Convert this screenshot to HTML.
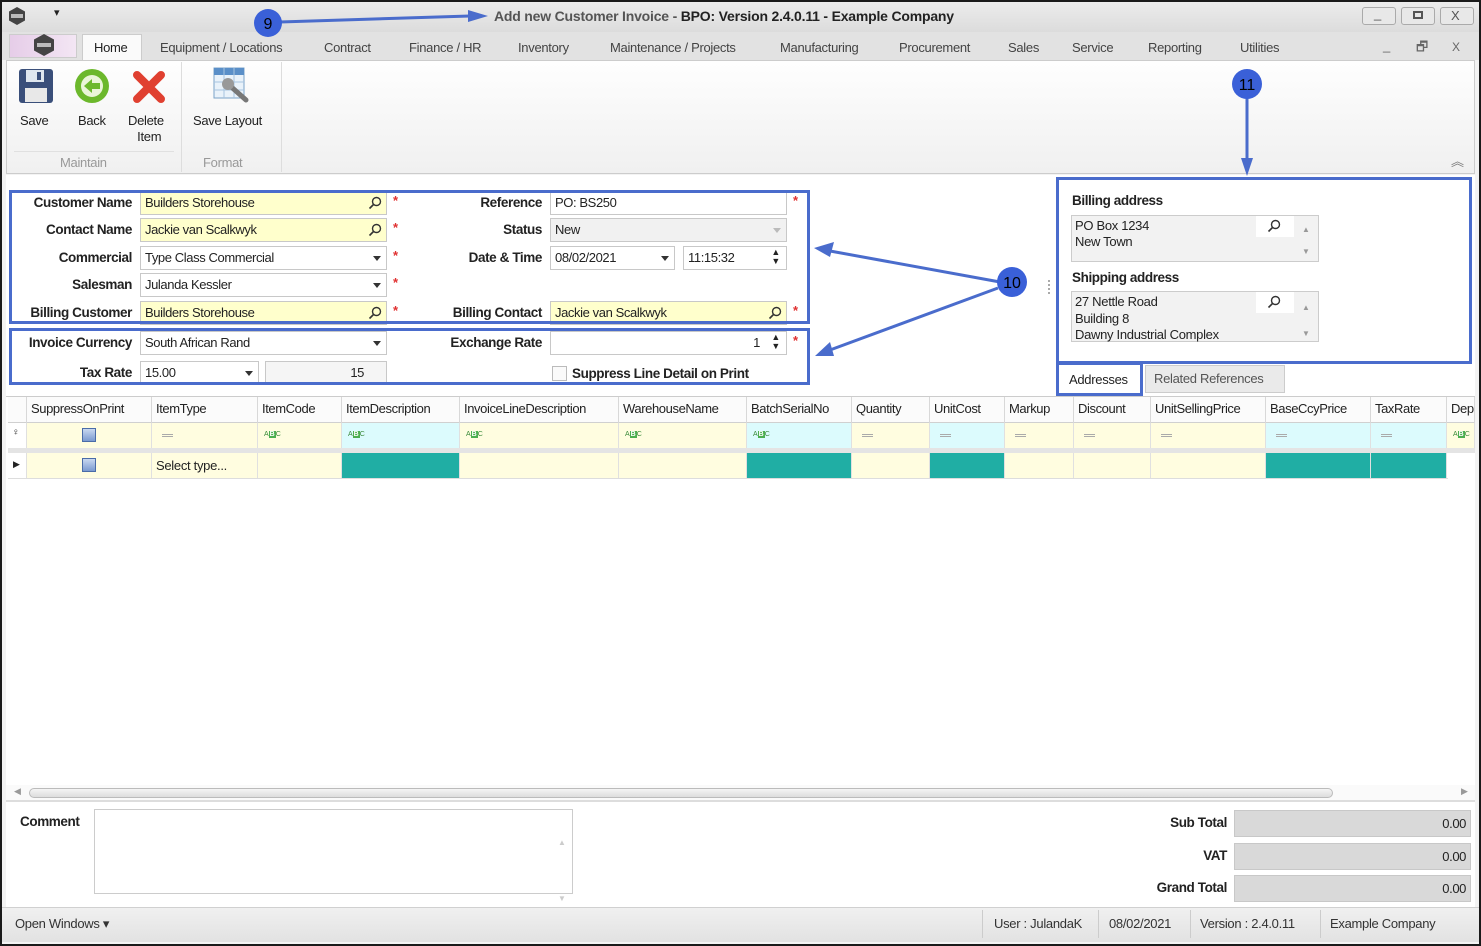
<!DOCTYPE html>
<html><head><meta charset="utf-8"><style>
*{box-sizing:border-box;margin:0;padding:0}
body{width:1481px;height:946px;overflow:hidden;background:#1a1a1a;font-family:"Liberation Sans",sans-serif;font-size:13px;color:#222;position:relative}
.a{position:absolute}
.t{position:absolute;white-space:nowrap;letter-spacing:-0.3px}
.lbl{position:absolute;white-space:nowrap;font-weight:bold;text-align:right;letter-spacing:-0.4px;font-size:13.5px;color:#222}
.in{position:absolute;border:1px solid #c8c8c8;background:#fff;height:24px;padding:3px 4px;white-space:nowrap;letter-spacing:-0.4px;font-size:13px}
.y{background:#ffffcc}
.star{position:absolute;color:#e03030;font-size:13px;font-weight:bold}
.dd{position:absolute;right:5px;top:9px;width:0;height:0;border-left:4px solid transparent;border-right:4px solid transparent;border-top:5px solid #333}
.mag{position:absolute;right:4px;top:4px;width:14px;height:14px}
.hc{position:absolute;top:0;height:26px;border-right:1px solid #d8d8d8;padding:4px 4px;white-space:nowrap;letter-spacing:-0.4px;font-size:13px;overflow:hidden}
.fc{position:absolute;top:0;height:25px;border-right:1px solid #e0e0e0;background:#fffde0}
.dc{position:absolute;top:0;height:25px;border-right:1px solid #e0e0e0;background:#fffde0}
.cy{background:#dcfbfd}
.tl{background:#20aea4}
.abc{position:absolute;left:6px;top:8px;font-size:7px;color:#3a8a3a;letter-spacing:0}
.abc b{background:#4caf50;color:#fff;padding:0 1px}
.eq{position:absolute;left:10px;top:11px;width:11px;height:3px;border-top:1px solid #aaa;border-bottom:1px solid #aaa}
</style></head><body>
<svg width="0" height="0" style="position:absolute"><defs><symbol id="m" viewBox="0 0 14 14"><circle cx="8.5" cy="5.5" r="4" fill="none" stroke="#333" stroke-width="1.4"/><line x1="5.5" y1="8.5" x2="1.5" y2="12.5" stroke="#333" stroke-width="1.6"/></symbol></defs></svg>
<div class="a" style="left:2px;top:2px;width:1477px;height:942px;background:#f3f3f3"></div>
<!-- title bar -->
<div class="a" style="left:2px;top:2px;width:1477px;height:30px;background:linear-gradient(#ececec,#dcdcdc)"></div>
<svg class="a" style="left:7px;top:6px" width="20" height="20"><path d="M10 1 L18 5.5 L18 14.5 L10 19 L2 14.5 L2 5.5 Z" fill="#444"/><rect x="4" y="8" width="12" height="4" fill="#bbb"/></svg>
<div class="t" style="left:54px;top:6px;font-size:11px">▾</div>
<div class="t" style="left:494px;top:8px;font-weight:bold;color:#555;font-size:14px;letter-spacing:-0.2px">Add new Customer Invoice - <span style="color:#222">BPO: Version 2.4.0.11 - Example Company</span></div>
<div class="a" style="left:1362px;top:7px;width:34px;height:18px;border:1px solid #aaa;border-radius:3px;background:#e8e8e8"></div>
<div class="a" style="left:1401px;top:7px;width:34px;height:18px;border:1px solid #aaa;border-radius:3px;background:#e8e8e8"></div>
<div class="a" style="left:1440px;top:7px;width:34px;height:18px;border:1px solid #aaa;border-radius:3px;background:#e8e8e8"></div>
<div class="t" style="left:1374px;top:6px;color:#555">_</div>
<div class="a" style="left:1413px;top:11px;width:10px;height:8px;border:2px solid #555"></div>
<div class="t" style="left:1451px;top:8px;color:#555">X</div>
<!-- tabs -->
<div class="a" style="left:2px;top:32px;width:1477px;height:28px;background:#e2e2e2"></div>
<div class="a" style="left:9px;top:34px;width:68px;height:24px;background:linear-gradient(90deg,#e6cde8,#f3e6f4);border:1px solid #ccc"></div>
<svg class="a" style="left:32px;top:33px" width="24" height="24"><path d="M12 1 L22 6.5 L22 17.5 L12 23 L2 17.5 L2 6.5 Z" fill="#444"/><rect x="5" y="10" width="14" height="4" fill="#bbb"/></svg>
<div class="a" style="left:82px;top:34px;width:60px;height:27px;background:#fafafa;border:1px solid #ccc;border-bottom:none"></div>
<div class="t" style="left:94px;top:40px">Home</div>
<div class="t" style="left:160px;top:40px;color:#444">Equipment / Locations</div>
<div class="t" style="left:324px;top:40px;color:#444">Contract</div>
<div class="t" style="left:409px;top:40px;color:#444">Finance / HR</div>
<div class="t" style="left:518px;top:40px;color:#444">Inventory</div>
<div class="t" style="left:610px;top:40px;color:#444">Maintenance / Projects</div>
<div class="t" style="left:780px;top:40px;color:#444">Manufacturing</div>
<div class="t" style="left:899px;top:40px;color:#444">Procurement</div>
<div class="t" style="left:1008px;top:40px;color:#444">Sales</div>
<div class="t" style="left:1072px;top:40px;color:#444">Service</div>
<div class="t" style="left:1148px;top:40px;color:#444">Reporting</div>
<div class="t" style="left:1240px;top:40px;color:#444">Utilities</div>
<div class="t" style="left:1383px;top:38px;color:#666">_</div>
<div class="t" style="left:1416px;top:38px;color:#666">🗗</div>
<div class="t" style="left:1452px;top:40px;color:#666;font-size:12px">X</div>
<!-- ribbon -->
<div class="a" style="left:6px;top:60px;width:1469px;height:114px;background:linear-gradient(#fefefe,#f0f0f0);border:1px solid #ccc"></div>
<div class="a" style="left:181px;top:62px;width:1px;height:110px;background:#ddd"></div>
<div class="a" style="left:281px;top:62px;width:1px;height:110px;background:#ddd"></div>
<svg class="a" style="left:18px;top:68px" width="36" height="36"><rect x="1" y="1" width="34" height="34" rx="3" fill="#3a4f7a"/><rect x="8" y="2" width="18" height="12" fill="#dfe6ee"/><rect x="19" y="4" width="4" height="8" fill="#3a4f7a"/><rect x="7" y="20" width="22" height="14" fill="#e8e8e8"/></svg>
<svg class="a" style="left:74px;top:68px" width="36" height="36"><circle cx="18" cy="18" r="17" fill="#6cb82c"/><circle cx="18" cy="18" r="11" fill="#eaf5d8"/><path d="M10 18 L18 11 L18 15 L26 15 L26 21 L18 21 L18 25 Z" fill="#6cb82c"/></svg>
<svg class="a" style="left:132px;top:70px" width="34" height="34"><path d="M5 5 L29 29 M29 5 L5 29" stroke="#e04030" stroke-width="8" stroke-linecap="round"/></svg>
<svg class="a" style="left:212px;top:66px" width="38" height="38"><rect x="2" y="2" width="30" height="30" fill="#e9f2fa" stroke="#7aa3c8"/><rect x="2" y="2" width="30" height="7" fill="#5a8fc8"/><path d="M2 16 H32 M2 24 H32 M12 2 V32 M22 2 V32" stroke="#a8c4e0"/><path d="M16 18 L34 34" stroke="#777" stroke-width="5" stroke-linecap="round"/><circle cx="16" cy="18" r="6" fill="#999"/></svg>
<div class="t" style="left:20px;top:113px">Save</div>
<div class="t" style="left:78px;top:113px">Back</div>
<div class="t" style="left:128px;top:113px;text-align:center;line-height:16px">Delete<br>&nbsp;&nbsp;Item</div>
<div class="t" style="left:193px;top:113px">Save Layout</div>
<div class="a" style="left:14px;top:151px;width:160px;height:1px;background:#e0e0e0"></div>
<div class="t" style="left:60px;top:155px;color:#999">Maintain</div>
<div class="t" style="left:203px;top:155px;color:#999">Format</div>
<div class="t" style="left:1451px;top:151px;color:#777">︽</div>
<!-- main area -->
<div class="a" style="left:6px;top:175px;width:1469px;height:732px;background:#fff"></div>
<!-- form left -->
<div class="lbl" style="left:10px;top:195px;width:122px">Customer Name</div>
<div class="lbl" style="left:10px;top:222px;width:122px">Contact Name</div>
<div class="lbl" style="left:10px;top:250px;width:122px">Commercial</div>
<div class="lbl" style="left:10px;top:277px;width:122px">Salesman</div>
<div class="lbl" style="left:10px;top:305px;width:122px">Billing Customer</div>
<div class="lbl" style="left:10px;top:335px;width:122px">Invoice Currency</div>
<div class="lbl" style="left:10px;top:365px;width:122px">Tax Rate</div>
<div class="in y" style="left:140px;top:191px;width:247px">Builders Storehouse<svg class="mag"><use href="#m"/></svg></div>
<div class="in y" style="left:140px;top:218px;width:247px">Jackie van Scalkwyk<svg class="mag"><use href="#m"/></svg></div>
<div class="in" style="left:140px;top:246px;width:247px">Type Class Commercial<span class="dd"></span></div>
<div class="in" style="left:140px;top:273px;width:247px">Julanda Kessler<span class="dd"></span></div>
<div class="in y" style="left:140px;top:301px;width:247px">Builders Storehouse<svg class="mag"><use href="#m"/></svg></div>
<div class="in" style="left:140px;top:331px;width:247px">South African Rand<span class="dd"></span></div>
<div class="in" style="left:140px;top:361px;width:119px">15.00<span class="dd"></span></div>
<div class="in" style="left:265px;top:361px;width:122px;background:#f5f5f5;text-align:right;padding-right:22px">15</div>
<div class="star" style="left:393px;top:193px">*</div>
<div class="star" style="left:393px;top:220px">*</div>
<div class="star" style="left:393px;top:248px">*</div>
<div class="star" style="left:393px;top:275px">*</div>
<div class="star" style="left:393px;top:303px">*</div>
<!-- form right -->
<div class="lbl" style="left:410px;top:195px;width:132px">Reference</div>
<div class="lbl" style="left:410px;top:222px;width:132px">Status</div>
<div class="lbl" style="left:410px;top:250px;width:132px">Date &amp; Time</div>
<div class="lbl" style="left:410px;top:305px;width:132px">Billing Contact</div>
<div class="lbl" style="left:410px;top:335px;width:132px">Exchange Rate</div>
<div class="in" style="left:550px;top:191px;width:237px">PO: BS250</div>
<div class="in" style="left:550px;top:218px;width:237px;background:#f1f1f1">New<span class="dd" style="border-top-color:#bbb"></span></div>
<div class="in" style="left:550px;top:246px;width:125px">08/02/2021<span class="dd"></span></div>
<div class="in" style="left:683px;top:246px;width:104px">11:15:32<span class="t" style="right:6px;top:1px;font-size:9px;line-height:9px">▲<br>▼</span></div>
<div class="in y" style="left:550px;top:301px;width:237px">Jackie van Scalkwyk<svg class="mag"><use href="#m"/></svg></div>
<div class="in" style="left:550px;top:331px;width:237px;text-align:right;padding-right:26px">1<span class="t" style="right:6px;top:1px;font-size:9px;line-height:9px">▲<br>▼</span></div>
<div class="star" style="left:793px;top:193px">*</div>
<div class="star" style="left:793px;top:303px">*</div>
<div class="star" style="left:793px;top:333px">*</div>
<div class="a" style="left:552px;top:366px;width:15px;height:15px;border:1px solid #bbb;background:#fafafa"></div>
<div class="lbl" style="left:572px;top:366px;text-align:left">Suppress Line Detail on Print</div>
<!-- annotation boxes -->
<div class="a" style="left:9px;top:190px;width:801px;height:134px;border:3px solid #4a6ccc"></div>
<div class="a" style="left:9px;top:328px;width:801px;height:57px;border:3px solid #4a6ccc"></div>
<!-- right panel -->
<div class="a" style="left:1048px;top:280px;width:3px;height:14px;border-left:2px dotted #aaa"></div>
<div class="a" style="left:1056px;top:177px;width:416px;height:187px;border:3px solid #4a6ccc"></div>
<div class="lbl" style="left:1072px;top:193px;text-align:left">Billing address</div>
<div class="a" style="left:1071px;top:215px;width:248px;height:47px;border:1px solid #ccc;background:#f2f2f2"></div>
<div class="a" style="left:1256px;top:216px;width:38px;height:21px;background:#fff"></div>
<div class="t" style="left:1075px;top:218px;line-height:16px">PO Box 1234<br>New Town</div>
<svg class="a" style="left:1267px;top:219px" width="14" height="14"><use href="#m"/></svg>
<div class="t" style="left:1302px;top:219px;font-size:8px;color:#999;line-height:22px">▲<br>▼</div>
<div class="lbl" style="left:1072px;top:270px;text-align:left">Shipping address</div>
<div class="a" style="left:1071px;top:291px;width:248px;height:51px;border:1px solid #ccc;background:#f2f2f2"></div>
<div class="a" style="left:1256px;top:292px;width:38px;height:21px;background:#fff"></div>
<div class="t" style="left:1075px;top:294px;line-height:16.5px">27 Nettle Road<br>Building 8<br>Dawny Industrial Complex</div>
<svg class="a" style="left:1267px;top:295px" width="14" height="14"><use href="#m"/></svg>
<div class="t" style="left:1302px;top:295px;font-size:8px;color:#999;line-height:26px">▲<br>▼</div>
<div class="a" style="left:1145px;top:365px;width:140px;height:28px;background:#eaeaea;border:1px solid #ccc"></div>
<div class="t" style="left:1154px;top:371px;color:#555">Related References</div>
<div class="a" style="left:1056px;top:362px;width:87px;height:34px;border:3px solid #4a6ccc;background:#fff"></div>
<div class="t" style="left:1069px;top:372px">Addresses</div>
<!-- arrows -->
<svg class="a" style="left:0;top:0" width="1481" height="400">
<g stroke="#4a6ccc" stroke-width="3" fill="#4a6ccc">
<line x1="280" y1="22" x2="470" y2="16"/><path d="M488 16 L468 10 L468 22 Z" stroke="none"/>
<line x1="1247" y1="96" x2="1247" y2="160"/><path d="M1247 176 L1241 158 L1253 158 Z" stroke="none"/>
<line x1="1000" y1="282" x2="830" y2="251"/><path d="M814 248 L834 242 L830 257 Z" stroke="none"/>
<line x1="998" y1="288" x2="830" y2="350"/><path d="M815 356 L830 342 L834 356 Z" stroke="none"/>
</g>
<circle cx="268" cy="23" r="14" fill="#3a60d8"/><text x="268" y="29" font-size="16" text-anchor="middle" font-family="Liberation Sans">9</text>
<circle cx="1247" cy="84" r="15" fill="#3a60d8"/><text x="1247" y="90" font-size="16" text-anchor="middle" font-family="Liberation Sans">11</text>
<circle cx="1012" cy="282" r="15" fill="#3a60d8"/><text x="1012" y="288" font-size="16" text-anchor="middle" font-family="Liberation Sans">10</text>
</svg>
<!-- grid -->
<div class="a" style="left:6px;top:396px;width:1469px;height:1px;background:#ccc"></div>
<div class="a" style="left:8px;top:397px;width:1467px;height:26px;background:#fbfbfb;border-bottom:1px solid #d0d0d0">
<div class="hc" style="left:0;width:19px"></div>
<div class="hc" style="left:19px;width:125px">SuppressOnPrint</div>
<div class="hc" style="left:144px;width:106px">ItemType</div>
<div class="hc" style="left:250px;width:84px">ItemCode</div>
<div class="hc" style="left:334px;width:118px">ItemDescription</div>
<div class="hc" style="left:452px;width:159px">InvoiceLineDescription</div>
<div class="hc" style="left:611px;width:128px">WarehouseName</div>
<div class="hc" style="left:739px;width:105px">BatchSerialNo</div>
<div class="hc" style="left:844px;width:78px">Quantity</div>
<div class="hc" style="left:922px;width:75px">UnitCost</div>
<div class="hc" style="left:997px;width:69px">Markup</div>
<div class="hc" style="left:1066px;width:77px">Discount</div>
<div class="hc" style="left:1143px;width:115px">UnitSellingPrice</div>
<div class="hc" style="left:1258px;width:105px">BaseCcyPrice</div>
<div class="hc" style="left:1363px;width:76px">TaxRate</div>
<div class="hc" style="left:1439px;width:28px">Dep</div>
</div>
<div class="a" style="left:8px;top:423px;width:1467px;height:25px">
<div class="fc" style="left:0;width:19px;background:#fff"><span class="t" style="left:4px;top:4px;font-size:10px">♀</span></div>
<div class="fc" style="left:19px;width:125px"><div class="a" style="left:55px;top:5px;width:14px;height:14px;border:1px solid #4a6ca8;background:linear-gradient(#c8d8f0,#7a9ad0)"></div></div>
<div class="fc" style="left:144px;width:106px"><span class="eq"></span></div>
<div class="fc" style="left:250px;width:84px"><span class="abc">A<b>B</b>C</span></div>
<div class="fc cy" style="left:334px;width:118px"><span class="abc">A<b>B</b>C</span></div>
<div class="fc" style="left:452px;width:159px"><span class="abc">A<b>B</b>C</span></div>
<div class="fc" style="left:611px;width:128px"><span class="abc">A<b>B</b>C</span></div>
<div class="fc cy" style="left:739px;width:105px"><span class="abc">A<b>B</b>C</span></div>
<div class="fc" style="left:844px;width:78px"><span class="eq"></span></div>
<div class="fc cy" style="left:922px;width:75px"><span class="eq"></span></div>
<div class="fc" style="left:997px;width:69px"><span class="eq"></span></div>
<div class="fc" style="left:1066px;width:77px"><span class="eq"></span></div>
<div class="fc" style="left:1143px;width:115px"><span class="eq"></span></div>
<div class="fc cy" style="left:1258px;width:105px"><span class="eq"></span></div>
<div class="fc cy" style="left:1363px;width:76px"><span class="eq"></span></div>
<div class="fc" style="left:1439px;width:28px"><span class="abc">A<b>B</b>C</span></div>
</div>
<div class="a" style="left:8px;top:448px;width:1467px;height:5px;background:#e4e4e4"></div>
<div class="a" style="left:8px;top:453px;width:1440px;height:26px;border-bottom:1px solid #ddd">
<div class="dc" style="left:0;width:19px;background:#fff"><span class="t" style="left:5px;top:6px;font-size:9px">▶</span></div>
<div class="dc" style="left:19px;width:125px"><div class="a" style="left:55px;top:5px;width:14px;height:14px;border:1px solid #4a6ca8;background:linear-gradient(#c8d8f0,#7a9ad0)"></div></div>
<div class="dc" style="left:144px;width:106px"><span class="t" style="left:4px;top:5px">Select type...</span></div>
<div class="dc" style="left:250px;width:84px"></div>
<div class="dc tl" style="left:334px;width:118px"></div>
<div class="dc" style="left:452px;width:159px"></div>
<div class="dc" style="left:611px;width:128px"></div>
<div class="dc tl" style="left:739px;width:105px"></div>
<div class="dc" style="left:844px;width:78px"></div>
<div class="dc tl" style="left:922px;width:75px"></div>
<div class="dc" style="left:997px;width:69px"></div>
<div class="dc" style="left:1066px;width:77px"></div>
<div class="dc" style="left:1143px;width:115px"></div>
<div class="dc tl" style="left:1258px;width:105px"></div>
<div class="dc tl" style="left:1363px;width:76px"></div>
</div>
<!-- scrollbar -->
<div class="a" style="left:6px;top:785px;width:1469px;height:17px;background:#fafafa;border-bottom:2px solid #ddd"></div>
<div class="t" style="left:14px;top:786px;font-size:9px;color:#999">◀</div>
<div class="t" style="left:1461px;top:786px;font-size:9px;color:#999">▶</div>
<div class="a" style="left:29px;top:788px;width:1304px;height:10px;border:1px solid #bbb;border-radius:5px;background:linear-gradient(#f4f4f4,#ddd)"></div>
<!-- bottom -->
<div class="lbl" style="left:20px;top:814px;text-align:left">Comment</div>
<div class="a" style="left:94px;top:809px;width:479px;height:85px;border:1px solid #ccc;background:#fff"></div>
<div class="t" style="left:558px;top:815px;font-size:8px;color:#ccc;line-height:56px">▲<br>▼</div>
<div class="lbl" style="left:1100px;top:815px;width:127px">Sub Total</div>
<div class="lbl" style="left:1100px;top:848px;width:127px">VAT</div>
<div class="lbl" style="left:1100px;top:880px;width:127px">Grand Total</div>
<div class="in" style="left:1234px;top:810px;width:237px;height:27px;background:#d9d9d9;text-align:right;padding-top:5px">0.00</div>
<div class="in" style="left:1234px;top:843px;width:237px;height:27px;background:#d9d9d9;text-align:right;padding-top:5px">0.00</div>
<div class="in" style="left:1234px;top:875px;width:237px;height:27px;background:#d9d9d9;text-align:right;padding-top:5px">0.00</div>
<!-- status bar -->
<div class="a" style="left:2px;top:907px;width:1477px;height:35px;background:linear-gradient(#f0f0f0,#e2e2e2);border-top:1px solid #d0d0d0"></div>
<div class="t" style="left:15px;top:916px;color:#333">Open Windows ▾</div>
<div class="a" style="left:982px;top:910px;width:1px;height:28px;background:#ccc"></div>
<div class="a" style="left:1098px;top:910px;width:1px;height:28px;background:#ccc"></div>
<div class="a" style="left:1190px;top:910px;width:1px;height:28px;background:#ccc"></div>
<div class="a" style="left:1320px;top:910px;width:1px;height:28px;background:#ccc"></div>
<div class="t" style="left:994px;top:916px;color:#333">User : JulandaK</div>
<div class="t" style="left:1109px;top:916px;color:#333">08/02/2021</div>
<div class="t" style="left:1200px;top:916px;color:#333">Version : 2.4.0.11</div>
<div class="t" style="left:1330px;top:916px;color:#333">Example Company</div>
</body></html>
